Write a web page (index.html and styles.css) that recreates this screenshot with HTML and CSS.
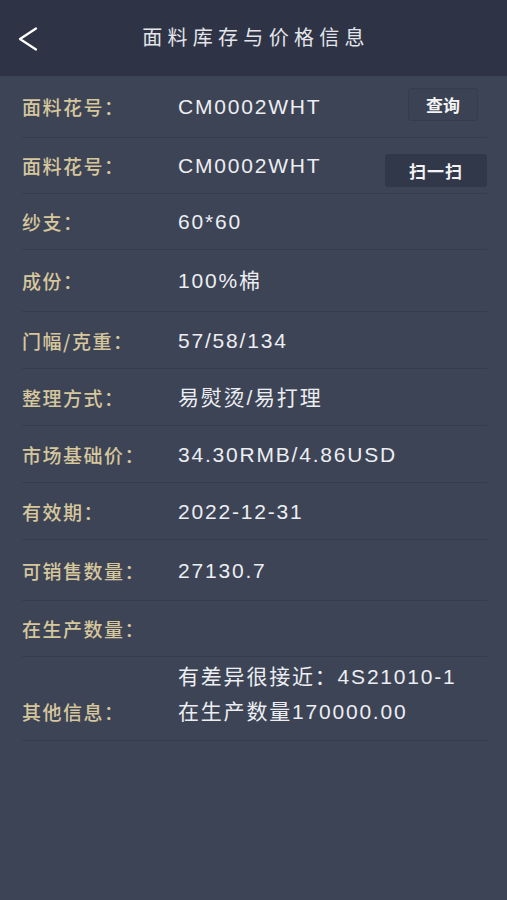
FILE: index.html
```html
<!DOCTYPE html>
<html lang="zh-CN">
<head>
<meta charset="utf-8">
<title>面料库存与价格信息</title>
<link rel="stylesheet" href="styles.css">
</head>
<body>
<header class="topbar">
  <span class="back">
    <svg width="20" height="24" viewBox="0 0 20 24"><path d="M18 1.5 L2 12 L18 22.5" fill="none" stroke="#ffffff" stroke-width="2.2" stroke-linecap="round" stroke-linejoin="round"/></svg>
  </span>
  <h1 class="title">面料库存与价格信息</h1>
  <span></span>
</header>
<main class="list">
  <div class="row h62">
    <span class="label">面料花号：</span>
    <span class="value">CM0002WHT</span>
    <span class="btn btn-query">查询</span>
  </div>
  <div class="row h56">
    <span class="label">面料花号：</span>
    <span class="value">CM0002WHT</span>
    <span class="btn btn-scan">扫一扫</span>
  </div>
  <div class="row h56">
    <span class="label">纱支：</span>
    <span class="value">60*60</span>
  </div>
  <div class="row h62">
    <span class="label">成份：</span>
    <span class="value">100%棉</span>
  </div>
  <div class="row h57">
    <span class="label">门幅/克重：</span>
    <span class="value">57/58/134</span>
  </div>
  <div class="row h57">
    <span class="label">整理方式：</span>
    <span class="value">易熨烫/易打理</span>
  </div>
  <div class="row h57">
    <span class="label">市场基础价：</span>
    <span class="value">34.30RMB/4.86USD</span>
  </div>
  <div class="row h57">
    <span class="label">有效期：</span>
    <span class="value">2022-12-31</span>
  </div>
  <div class="row h61">
    <span class="label">可销售数量：</span>
    <span class="value">27130.7</span>
  </div>
  <div class="row h56">
    <span class="label">在生产数量：</span>
    <span class="value"></span>
  </div>
  <div class="row row-multi">
    <span class="label">其他信息：</span>
    <span class="value multi">有差异很接近：4S21010-1<br>在生产数量170000.00</span>
  </div>
</main>
</body>
</html>
```
FILE: styles.css
```css
html, body {
  margin: 0;
  padding: 0;
}
body {
  width: 507px;
  min-height: 900px;
  background: #3d4456;
  font-family: "Noto Sans CJK SC", sans-serif;
}
.topbar {
  height: 76px;
  background: #2e3445;
  display: grid;
  grid-template-columns: 56px 1fr 56px;
  align-items: center;
}
.back {
  display: flex;
  align-items: center;
  padding-left: 18px;
  margin-top: 2px;
}
.title {
  margin: 0;
  text-align: center;
  color: #e4e5ea;
  font-size: 20px;
  font-weight: 400;
  letter-spacing: 5.3px;
  line-height: 1;
  margin-top: -2px;
  padding-left: 5px;
}
.list {
  margin: 0 20px 0 22px;
}
.row {
  box-sizing: border-box;
  display: grid;
  grid-template-columns: 156px 1fr auto;
  align-items: center;
  border-bottom: 1px solid #363c4d;
}
.h56 { height: 56px; }
.h57 { height: 57px; }
.h61 { height: 61px; }
.h62 { height: 62px; }
.label {
  color: #d6c79d;
  font-size: 19px;
  font-weight: 500;
  letter-spacing: 1.5px;
  line-height: 1;
}
.value {
  color: #eceef2;
  font-family: "Liberation Sans", "Noto Sans CJK SC", sans-serif;
  font-size: 21px;
  letter-spacing: 1.8px;
  line-height: 1;
}
.btn {
  box-sizing: border-box;
  height: 33px;
  display: flex;
  align-items: center;
  justify-content: center;
  color: #f4f4f6;
  font-size: 17px;
  font-weight: 700;
  border-radius: 3px;
}
.btn-query {
  width: 70px;
  margin-right: 9px;
  background: #3b4253;
  border: 1px solid #363c4c;
  margin-top: -4px;
}
.btn-scan {
  width: 102px;
  background: #313849;
  letter-spacing: 1px;
  margin-top: 10px;
}
.row-multi {
  height: 84px;
  align-items: end;
  padding-bottom: 11px;
}
.row-multi .label {
  padding-bottom: 8px;
}
.multi {
  line-height: 35px;
}
```
